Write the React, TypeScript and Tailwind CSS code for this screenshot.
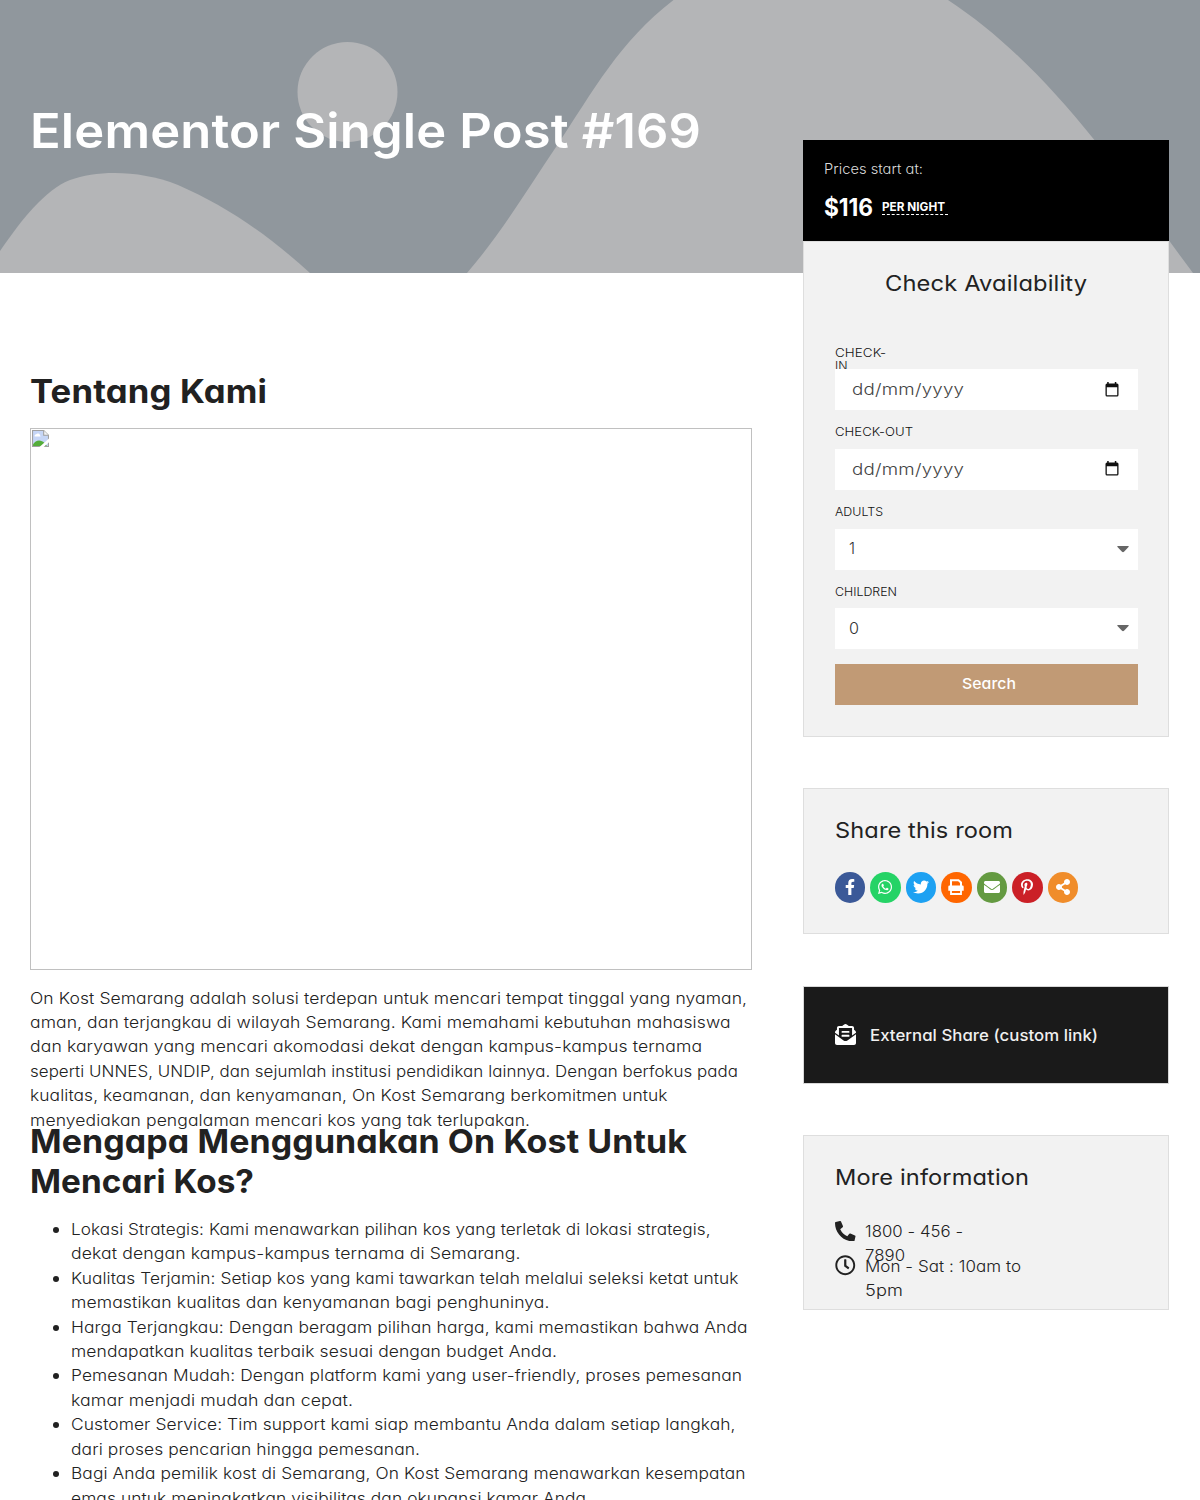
import { useLayoutEffect, useRef, type ReactNode } from "react";
import {
  FaEnvelope,
  FaEnvelopeOpenText,
  FaFacebookF,
  FaPhoneAlt,
  FaPinterestP,
  FaRegClock,
  FaShareAlt,
  FaTwitter,
  FaWhatsapp,
} from "react-icons/fa";

/** One line of text, tracked and stretched a little so that it spans `width` pixels. */
function Line({ children, width, className = "" }: { children: string; width: number; className?: string }) {
  const ref = useRef<HTMLSpanElement>(null);
  useLayoutEffect(() => {
    const el = ref.current;
    if (!el) return;
    el.style.letterSpacing = "0px";
    el.style.transform = "none";
    const natural = el.getBoundingClientRect().width;
    const tracking = ((width - natural) * 0.1) / children.length;
    el.style.letterSpacing = `${tracking}px`;
    const tracked = el.getBoundingClientRect().width - tracking;
    el.style.transform = `scaleX(${width / tracked})`;
  }, [children, width]);
  return (
    <span className={`block ${className}`} style={{ width }}>
      <span ref={ref} className="inline-block origin-left whitespace-pre">
        {children}
      </span>
    </span>
  );
}

const about: [string, number][] = [
  ["On Kost Semarang adalah solusi terdepan untuk mencari tempat tinggal yang nyaman,", 717],
  ["aman, dan terjangkau di wilayah Semarang. Kami memahami kebutuhan mahasiswa", 700.5],
  ["dan karyawan yang mencari akomodasi dekat dengan kampus-kampus ternama", 672],
  ["seperti UNNES, UNDIP, dan sejumlah institusi pendidikan lainnya. Dengan berfokus pada", 708],
  ["kualitas, keamanan, dan kenyamanan, On Kost Semarang berkomitmen untuk", 637.5],
  ["menyediakan pengalaman mencari kos yang tak terlupakan.", 500],
];

const reasons: [string, number][][] = [
  [
    ["Lokasi Strategis: Kami menawarkan pilihan kos yang terletak di lokasi strategis,", 639.5],
    ["dekat dengan kampus-kampus ternama di Semarang.", 449.5],
  ],
  [
    ["Kualitas Terjamin: Setiap kos yang kami tawarkan telah melalui seleksi ketat untuk", 667.5],
    ["memastikan kualitas dan kenyamanan bagi penghuninya.", 478.5],
  ],
  [
    ["Harga Terjangkau: Dengan beragam pilihan harga, kami memastikan bahwa Anda", 676.5],
    ["mendapatkan kualitas terbaik sesuai dengan budget Anda.", 486],
  ],
  [
    ["Pemesanan Mudah: Dengan platform kami yang user-friendly, proses pemesanan", 671],
    ["kamar menjadi mudah dan cepat.", 282],
  ],
  [
    ["Customer Service: Tim support kami siap membantu Anda dalam setiap langkah,", 664.5],
    ["dari proses pencarian hingga pemesanan.", 349],
  ],
  [
    ["Bagi Anda pemilik kost di Semarang, On Kost Semarang menawarkan kesempatan", 674.5],
    ["emas untuk meningkatkan visibilitas dan okupansi kamar Anda.", 520],
  ],
];

function PrinterIcon() {
  return (
    <svg width="16" height="16" viewBox="0 0 16 16" fill="none" stroke="currentColor" aria-hidden="true">
      <path d="M3 7V1.200h7.500L13 3.500V7" strokeWidth="2" />
      <path d="M1.500 6.500h13a1.200 1.200 0 0 1 1.200 1.200v4H.3v-4a1.200 1.200 0 0 1 1.200-1.200Z" fill="currentColor" stroke="none" />
      <path d="M3 11h10v4H3Z" fill="#ff6600" strokeWidth="1.800" />
    </svg>
  );
}

const shares = [
  { name: "Facebook", Icon: FaFacebookF, color: "bg-[#3b5998]" },
  { name: "WhatsApp", Icon: FaWhatsapp, color: "bg-[#25d366]" },
  { name: "Twitter", Icon: FaTwitter, color: "bg-[#1da1f2]" },
  { name: "Print", Icon: PrinterIcon, color: "bg-[#ff6600]" },
  { name: "Email", Icon: FaEnvelope, color: "bg-[#649a41]" },
  { name: "Pinterest", Icon: FaPinterestP, color: "bg-[#cb2027]" },
  { name: "Share", Icon: FaShareAlt, color: "bg-[#f08d2b]" },
];

function Hero() {
  return (
    <header className="relative h-[272.5px] overflow-hidden bg-[#90979d]">
      <svg className="absolute inset-0" width="1200" height="273" viewBox="0 0 1200 273" fill="#b4b5b7" aria-hidden="true">
        <circle cx="347.5" cy="92" r="50" />
        <path d="M0 251C22 219 45 190 70 180C98 170 140 170 178 185C226 206 267 234 310 273H0Z" />
        <path d="M467 273C500 235 527 190 556 147C594 90 619 42 673.500 0H948C1003 36 1051 86 1094 139.500C1127 181 1160 229 1193 273Z" />
      </svg>
      <h1 className="relative pt-[101px] pl-[30px] text-[48px] leading-[60px] font-semibold text-white">
        <Line width={671}>Elementor Single Post #169</Line>
      </h1>
    </header>
  );
}

function BrokenImage() {
  return (
    <div className="h-[542px] w-[722px] border border-[#c0c0c0] p-px">
      <svg width="17" height="17" viewBox="0 0 16 16" aria-hidden="true">
        <path d="M.5.500H11L15.500 5V15.500H.5Z" fill="#c6d6f6" stroke="#a0a0a0" />
        <path d="M2.500 6a1.500 1.500 0 0 1 1.500-2 2 2 0 0 1 3.500 1 1 1 0 0 1 .5 1Z" fill="#fff" />
        <path d="M1 15v-1.500C3.500 9 8.500 8.500 12 12.500L14 15Z" fill="#54ad3a" />
        <path d="M11 .5V5h4.500" fill="#f5f5f5" stroke="#a0a0a0" />
        <path d="M7 16 16 8v3.500L11 16Z" fill="#fff" />
      </svg>
    </div>
  );
}

function Article() {
  return (
    <article className="w-[722px] pt-[99px] text-[16px] leading-[24.450px] font-light text-[#222]">
      <h2 className="text-[32px] leading-10 font-bold text-[#212121]">
        <Line width={237}>Tentang Kami</Line>
      </h2>
      <div className="mt-[16px]">
        <BrokenImage />
      </div>
      <p className="mt-[16px]">
        {about.map(([text, width]) => (
          <Line key={text} width={width}>{text}</Line>
        ))}
      </p>
      <h2 className="-mt-[10px] text-[32px] leading-10 font-bold text-[#212121]">
        <Line width={657}>Mengapa Menggunakan On Kost Untuk</Line>
        <Line width={224}>Mencari Kos?</Line>
      </h2>
      <ul className="mt-[14.500px]">
        {reasons.map((lines) => (
          <li key={lines[0][0]} className="flex">
            <span className="mt-[10px] mr-[12px] ml-[23px] size-[6px] shrink-0 rounded-full bg-[#212121]" />
            <div>
              {lines.map(([text, width]) => (
                <Line key={text} width={width}>{text}</Line>
              ))}
            </div>
          </li>
        ))}
      </ul>
    </article>
  );
}

function CalendarIcon() {
  return (
    <svg width="14" height="16" viewBox="0 0 14 16" aria-hidden="true">
      <path d="M2.200 0H3.700v1.500h6.100V0h1.500v1.500H12A1.500 1.500 0 0 1 13.500 3v10a1.500 1.500 0 0 1-1.500 1.500H2A1.500 1.500 0 0 1 .5 13V3A1.500 1.500 0 0 1 2 1.500h.2ZM1.800 5.200v8h10.400v-8Z" fill="#111" fillRule="evenodd" />
    </svg>
  );
}

function DateField() {
  return (
    <div className="flex h-[41px] items-center justify-between bg-white pr-[19px] pl-[17px] text-[16px] font-light text-[#444]">
      <Line width={112} className="-mt-px">dd/mm/yyyy</Line>
      <CalendarIcon />
    </div>
  );
}

function SelectField({ children, width }: { children: string; width: number }) {
  return (
    <div className="flex h-[41px] items-center justify-between bg-white pr-[9px] pl-[14px] text-[16px] font-light text-[#333]">
      <Line width={width} className="-mt-[2px]">{children}</Line>
      <svg width="12" height="7" viewBox="0 0 12 7" aria-hidden="true">
        <path d="M.7 0h10.600q.8.300.2 1L7 5.800q-1 .9-2 0L.5 1Q-.1.300.7 0Z" fill="#666" />
      </svg>
    </div>
  );
}

function Label({ children }: { children: ReactNode }) {
  return <div className="h-[38.700px] pt-[15px] text-[12.300px] leading-[13px] font-light text-[#111]">{children}</div>;
}

function Booking() {
  return (
    <section>
      <div className="h-[100.500px] bg-black pt-[16.500px] pl-[21px] text-white">
        <div className="text-[14px] leading-6 font-light text-[#dcdcdc]">
          <Line width={99}>Prices start at:</Line>
        </div>
        <div className="mt-[12px] flex h-[30px] items-center gap-[8.500px]">
          <Line width={49} className="text-[24px] leading-[30px] font-bold">$116</Line>
          <div className="mt-px w-[66px] border-b border-dashed border-white text-[11.500px] leading-[13px] font-bold">
            <Line width={63}>PER NIGHT</Line>
          </div>
        </div>
      </div>
      <div className="h-[496px] border border-[#dedede] bg-[#f2f2f2] pr-[30.500px] pl-[31px] pt-[25.500px]">
        <h3 className="flex justify-center text-[21.500px] leading-8 font-normal text-[#222]">
          <Line width={202}>Check Availability</Line>
        </h3>
        <div className="mt-[30px]">
          <div className="h-[40px] pt-[16.500px] text-[12.300px] leading-[13px] font-light text-[#111]">
            <Line width={51}>CHECK-</Line>
            <Line width={12.5} className="h-[10.500px] overflow-hidden">IN</Line>
          </div>
          <DateField />
          <Label><Line width={78}>CHECK-OUT</Line></Label>
          <DateField />
          <Label><Line width={48}>ADULTS</Line></Label>
          <SelectField width={6}>1</SelectField>
          <Label><Line width={62}>CHILDREN</Line></Label>
          <SelectField width={10}>0</SelectField>
          <button className="mt-[15px] flex h-[40.500px] w-full items-center justify-center bg-[#c19a75] pl-[3px] text-[15px] font-medium text-white">
            <Line width={54}>Search</Line>
          </button>
        </div>
      </div>
    </section>
  );
}

function Sidebar() {
  return (
    <aside className="-mt-[132.300px] w-[366.400px]">
      <Booking />
      <section className="mt-[51px] h-[146.500px] border border-[#dedede] bg-[#f2f2f2] px-[31px] pt-[25px]">
        <h3 className="text-[21.500px] leading-8 font-normal text-[#222]">
          <Line width={178}>Share this room</Line>
        </h3>
        <div className="mt-[26.500px] -ml-[.3px] flex gap-[5px]">
          {shares.map(({ name, Icon, color }) => (
            <a key={name} aria-label={name} className={`flex size-[30.500px] shrink-0 items-center justify-center rounded-full text-[16px] text-white ${color}`}>
              <Icon />
            </a>
          ))}
        </div>
      </section>
      <section className="mt-[51.300px] flex h-[98px] items-center gap-[14px] border border-[#d8d8d8] bg-[#1a1a1a] px-[31px] text-[16px] font-medium text-[#f0f0f0]">
        <FaEnvelopeOpenText className="size-[21px] text-white" />
        <Line width={228}>External Share (custom link)</Line>
      </section>
      <section className="mt-[51px] h-[175.500px] border border-[#dedede] bg-[#f2f2f2] px-[31px] pt-[25.300px]">
        <h3 className="text-[21.500px] leading-8 font-normal text-[#222]">
          <Line width={194}>More information</Line>
        </h3>
        <div className="mt-[26px] text-[16px] leading-[24.500px] font-light text-[#222]">
          <div className="flex h-[35px] gap-[9.500px]">
            <FaPhoneAlt className="mt-[2px] size-[20.500px] shrink-0" />
            <div>
              <Line width={98}>1800 - 456 -</Line>
              <Line width={40}>7890</Line>
            </div>
          </div>
          <div className="flex gap-[9.500px]">
            <FaRegClock className="mt-[1.500px] size-[20.500px] shrink-0" />
            <div>
              <Line width={156}>Mon - Sat : 10am to</Line>
              <Line width={38}>5pm</Line>
            </div>
          </div>
        </div>
      </section>
    </aside>
  );
}

export default function App() {
  return (
    <div className="h-[1500px] w-[1200px] overflow-hidden bg-white font-[Inter,sans-serif] [font-feature-settings:'cv11'_1]">
      <Hero />
      <main className="relative flex items-start gap-[51px] pl-[30px]">
        <Article />
        <Sidebar />
      </main>
    </div>
  );
}
